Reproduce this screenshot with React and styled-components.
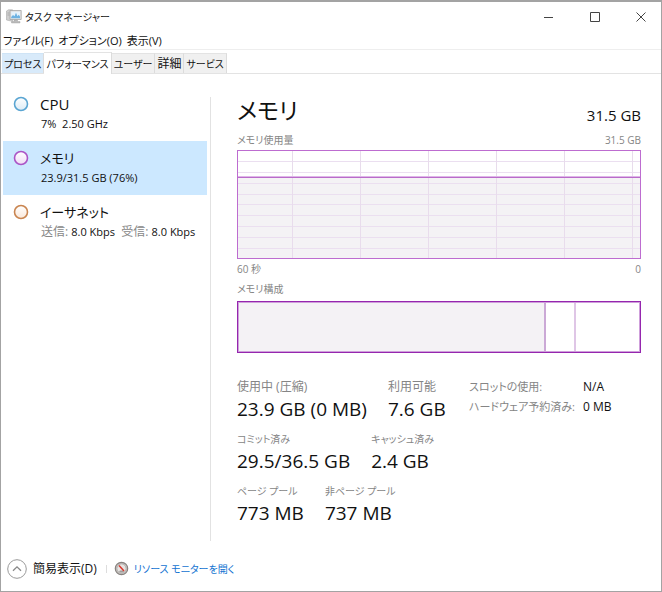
import React from "react";
import styled, { createGlobalStyle } from "styled-components";

const GlobalStyle = createGlobalStyle`
  *, *::before, *::after { box-sizing: border-box; }
  body {
    margin: 0;
    background: #fff;
    color: #111;
    font-family: "Open Sans", "Noto Sans CJK JP", sans-serif;
    font-size: 12px;
    font-feature-settings: "palt";
  }
  button { font: inherit; font-feature-settings: inherit; color: inherit; background: none; border: 0; padding: 0; }
  h1, h2, p, dl, dd, dt { margin: 0; font-weight: 400; }
`;

const Window = styled.div`
  display: flex;
  flex-direction: column;
  min-height: 100vh;
  border: 1px solid #a3a3a3;
  border-top-width: 2px;
`;

const TitleBar = styled.header`
  display: flex;
  align-items: center;
  height: 29px;
  padding-left: 5px;
  gap: 3px;
`;

const WindowTitle = styled.h1`
  flex: 1;
  font-size: 10px;
  line-height: 20px;
`;

const CaptionButton = styled.button`
  display: grid;
  place-items: center;
  width: 46px;
  height: 28px;
`;

const CaptionGroup = styled.div`
  display: flex;
  margin-right: -3px;
`;

const MenuBar = styled.nav`
  display: flex;
  align-items: flex-end;
  gap: 5px;
  height: 19px;
  padding-left: 2px;
  border-bottom: 1px solid #eee;
`;

const MenuItem = styled.button`
  font-size: 11px;
  line-height: 16px;
  white-space: nowrap;
`;

const TabStrip = styled.div`
  display: flex;
  align-items: flex-end;
  height: 24px;
  padding-left: 1px;
  border-bottom: 1px solid #e3e3e3;
`;

const Tab = styled.button`
  height: ${(p) => (p.$active ? 22 : 20)}px;
  margin-bottom: ${(p) => (p.$active ? -1 : 0)}px;
  padding: 0 2px;
  border-right: 1px solid #dcdcdc;
  border-top: 1px solid ${(p) => (p.$hot ? "#cfe4f6" : "#e3e3e3")};
  background: ${(p) => (p.$active ? "#fff" : p.$hot ? "#d8eafa" : "#f0f0f0")};
  font-size: ${(p) => (p.$kanji ? 12 : 10)}px;
  line-height: 18px;
  white-space: nowrap;
`;

const Body = styled.div`
  display: flex;
  flex: 1;
  padding: 13px 20px 0 2px;
`;

const Sidebar = styled.aside`
  flex: none;
  width: 204px;
`;

const ResourceItem = styled.button`
  display: flex;
  align-items: flex-start;
  gap: 11px;
  width: 100%;
  height: 54px;
  padding: 7px 0 0 10px;
  text-align: left;
  background: ${(p) => (p.$active ? "#cce8ff" : "transparent")};
`;

const ResourceText = styled.span`
  display: flex;
  flex-direction: column;
  white-space: nowrap;
`;

const ResourceName = styled.span`
  font-size: ${(p) => (p.$latin ? 15 : 13)}px;
  line-height: 20px;
`;

const ResourceValue = styled.span`
  padding-left: 1px;
  font-size: 11px;
  line-height: 19px;
  white-space: pre;
  em { color: #888; font-size: 12px; font-style: normal; }
`;

const DotSlot = styled.span`
  padding-top: 2px;
  line-height: 0;
`;

const Divider = styled.div`
  flex: none;
  width: 1px;
  margin: 10px 26px 4px 3px;
  background: #e2e2e2;
`;

const Main = styled.main`
  flex: 1;
  min-width: 0;
`;

const Heading = styled.div`
  display: flex;
  align-items: flex-end;
  justify-content: space-between;
  height: 43px;
`;

const PageTitle = styled.h2`
  font-family: "Noto Sans CJK JP", sans-serif;
  font-size: 23px;
  line-height: 42px;
`;

const Capacity = styled.p`
  font-size: 15px;
  line-height: 30px;
`;

const Caption = styled.div`
  display: flex;
  justify-content: space-between;
  color: #858585;
  font-size: 10px;
  line-height: 20px;
  white-space: nowrap;
`;

const Chart = styled.svg`
  display: block;
  width: 100%;
  height: ${(p) => p.$height}px;
  margin-top: ${(p) => (p.$strong ? 2 : 0)}px;
  border: 1px solid ${(p) => (p.$strong ? "#9526ae" : "#bd6cd0")};
  shape-rendering: crispEdges;
`;

const Details = styled.div`
  display: flex;
  padding-top: 24px;
`;

const StatRows = styled.div`
  flex: none;
  width: 232px;
`;

const StatRow = styled.dl`
  display: flex;
  gap: 21px;
  height: 52px;
  white-space: nowrap;
`;

const StatLabel = styled.dt`
  height: 20px;
  color: #858585;
  font-size: ${(p) => (p.$kanji ? 12 : 10)}px;
  line-height: 20px;
`;

const StatValue = styled.dd`
  font-size: 19px;
  line-height: 24px;
`;

const Facts = styled.table`
  border-collapse: collapse;
  height: 40px;
  align-self: flex-start;
  white-space: nowrap;
  font-size: 11px;
  line-height: 20px;
  th { width: 114px; padding: 0; color: #858585; font-weight: 400; text-align: left; }
  td { padding: 0; font-size: 12px; }
`;

const Footer = styled.footer`
  display: flex;
  align-items: center;
  height: 46px;
  padding: 1px 6px 0;
`;

const Toggle = styled.button`
  display: flex;
  align-items: center;
  gap: 6px;
  font-size: 12px;
  line-height: 20px;
`;

const MonitorLink = styled.a`
  display: flex;
  align-items: center;
  gap: 5px;
  margin-left: 9px;
  padding-left: 8px;
  color: #1373d1;
  font-size: 10px;
  line-height: 20px;
  text-decoration: none;
  background: linear-gradient(#ddd, #ddd) left center / 1px 8px no-repeat;
`;

const AppIcon = () => (
  <svg width="16" height="16" viewBox="0 0 16 16" aria-hidden="true">
    <path d="M.5 2l2-1.200h4v11.500L.5 11z" fill="#cfcfcf" stroke="#aaa" strokeWidth=".6" />
    <path d="M1.500 4h2M1.500 6h2" stroke="#999" strokeWidth=".7" />
    <path d="M4 1.500h11.200v9H4z" fill="#e2e2e2" stroke="#a6a6a6" strokeWidth=".8" />
    <path d="M5.200 2.800h8.800v6.400H5.200z" fill="#e6f2fb" />
    <path d="M5.200 8l1.800-2 1.500 1.200 1.500-3.400 1.500 3.400 1.200-1.400 1.300 1.700v1.700H5.200z" fill="#6db2e2" />
    <path d="M8 11h3.500v1.500h2.500V14H5.500v-1.500H8z" fill="#bcbcbc" stroke="#999" strokeWidth=".4" />
  </svg>
);

const Dot = ({ id, color, tint }) => (
  <svg width="16" height="16" viewBox="0 0 16 16" aria-hidden="true">
    <defs>
      <linearGradient id={id} x1="0" y1="0" x2="0" y2="1">
        <stop offset="0" stopColor="#fff" />
        <stop offset="1" stopColor={tint} />
      </linearGradient>
    </defs>
    <circle cx="8" cy="8" r="6.500" fill={`url(#${id})`} stroke={color} strokeWidth="1.600" />
  </svg>
);

const MonitorIcon = () => (
  <svg width="15" height="15" viewBox="0 0 15 15" aria-hidden="true">
    <circle cx="7.500" cy="7.500" r="6.200" fill="#c8c5c3" stroke="#87827f" strokeWidth="1.200" />
    <circle cx="7.500" cy="7.500" r="4.600" fill="#e6e4e2" stroke="#a5a19e" strokeWidth=".7" />
    <path d="M5 10.500a4 4 0 0 0 5 0l-1-1H6z" fill="#a19e9c" />
    <path d="M5 4.500l5 5.500" stroke="#d9362c" strokeWidth="1.500" />
  </svg>
);

const UsageChart = () => (
  <Chart $height={109} role="img" aria-label="メモリ使用量">
    <rect x="0" y="26" width="100%" height="100%" fill="#f4f2f5" />
    {[10, 21, 32, 43, 53, 64, 75, 86, 97].map((y) => (
      <rect key={y} x="0" y={y} width="100%" height="1" fill="#ebdff0" />
    ))}
    {[13.5, 30.4, 47.3, 64.2, 81.1, 98].map((x) => (
      <rect key={x} x={`${x}%`} y="0" width="1" height="100%" fill="#e8dcec" />
    ))}
    <rect x="0" y="25" width="100%" height="1" fill="#dfb6e8" />
    <rect x="0" y="26" width="100%" height="1" fill="#b96bca" />
  </Chart>
);

const CompositionChart = () => (
  <Chart $height={52} $strong role="img" aria-label="メモリ構成">
    <rect x="0" y="0" width="76.2%" height="100%" fill="#f4f2f5" />
    <rect x="76.200%" y="0" width="2" height="100%" fill="#cba9d6" />
    <rect x="83.700%" y="0" width="2" height="100%" fill="#dfc6e6" />
    <rect x="0" y="0" width="100%" height="100%" fill="none" stroke="#cf9fdb" strokeWidth="2" />
  </Chart>
);

const resources = [
  { id: "cpu", name: "CPU", latin: true, value: "7%  2.50 GHz", color: "#5aa5d2", tint: "#dcebf6" },
  { id: "memory", name: "メモリ", value: "23.9/31.5 GB (76%)", color: "#ab55c6", tint: "#f0dcf6", active: true },
  {
    id: "ethernet",
    name: "イーサネット",
    value: (
      <>
        <em>送信: </em>8.0 Kbps<em>{"  受信: "}</em>8.0 Kbps
      </>
    ),
    color: "#c98550",
    tint: "#fae8da",
  },
];

const stats = [
  [
    { label: "使用中 (圧縮)", value: "23.9 GB (0 MB)", kanji: true },
    { label: "利用可能", value: "7.6 GB", kanji: true },
  ],
  [
    { label: "コミット済み", value: "29.5/36.5 GB" },
    { label: "キャッシュ済み", value: "2.4 GB" },
  ],
  [
    { label: "ページ プール", value: "773 MB" },
    { label: "非ページ プール", value: "737 MB" },
  ],
];

export default function App() {
  return (
    <>
      <GlobalStyle />
      <Window>
        <TitleBar>
          <AppIcon />
          <WindowTitle>タスク マネージャー</WindowTitle>
          <CaptionGroup>
            <CaptionButton aria-label="最小化">
              <svg width="10" height="10"><path d="M0 5.500h9" stroke="#444" /></svg>
            </CaptionButton>
            <CaptionButton aria-label="最大化">
              <svg width="10" height="10"><path d="M.5.5h9v9h-9z" fill="none" stroke="#444" /></svg>
            </CaptionButton>
            <CaptionButton aria-label="閉じる">
              <svg width="10" height="10"><path d="M.5.5l9 9M9.500.5l-9 9" stroke="#444" /></svg>
            </CaptionButton>
          </CaptionGroup>
        </TitleBar>
        <MenuBar>
          <MenuItem>ファイル(F)</MenuItem>
          <MenuItem>オプション(O)</MenuItem>
          <MenuItem>表示(V)</MenuItem>
        </MenuBar>
        <TabStrip role="tablist">
          <Tab role="tab" $hot>プロセス</Tab>
          <Tab role="tab" aria-selected="true" $active>パフォーマンス</Tab>
          <Tab role="tab">ユーザー</Tab>
          <Tab role="tab" $kanji>詳細</Tab>
          <Tab role="tab">サービス</Tab>
        </TabStrip>
        <Body>
          <Sidebar>
            {resources.map((r) => (
              <ResourceItem key={r.id} $active={r.active}>
                <DotSlot><Dot id={r.id} color={r.color} tint={r.tint} /></DotSlot>
                <ResourceText>
                  <ResourceName $latin={r.latin}>{r.name}</ResourceName>
                  <ResourceValue>{r.value}</ResourceValue>
                </ResourceText>
              </ResourceItem>
            ))}
          </Sidebar>
          <Divider />
          <Main>
            <Heading>
              <PageTitle>メモリ</PageTitle>
              <Capacity>31.5 GB</Capacity>
            </Heading>
            <Caption><span>メモリ使用量</span><span>31.5 GB</span></Caption>
            <UsageChart />
            <Caption><span>60 秒</span><span>0</span></Caption>
            <Caption><span>メモリ構成</span></Caption>
            <CompositionChart />
            <Details>
              <StatRows>
                {stats.map((row) => (
                  <StatRow key={row[0].label}>
                    {row.map((s) => (
                      <div key={s.label}>
                        <StatLabel $kanji={s.kanji}>{s.label}</StatLabel>
                        <StatValue>{s.value}</StatValue>
                      </div>
                    ))}
                  </StatRow>
                ))}
              </StatRows>
              <Facts>
                <tbody>
                  <tr><th scope="row">スロットの使用:</th><td>N/A</td></tr>
                  <tr><th scope="row">ハードウェア予約済み:</th><td>0 MB</td></tr>
                </tbody>
              </Facts>
            </Details>
          </Main>
        </Body>
        <Footer>
          <Toggle>
            <svg width="20" height="20" viewBox="0 0 20 20" aria-hidden="true">
              <circle cx="10" cy="10" r="9.300" fill="#fff" stroke="#999" strokeWidth="1" />
              <path d="M6 11.800l4-4 4 4" fill="none" stroke="#888" strokeWidth="1.300" />
            </svg>
            簡易表示(D)
          </Toggle>
          <MonitorLink href="#resource-monitor">
            <MonitorIcon />
            リソース モニターを開く
          </MonitorLink>
        </Footer>
      </Window>
    </>
  );
}
